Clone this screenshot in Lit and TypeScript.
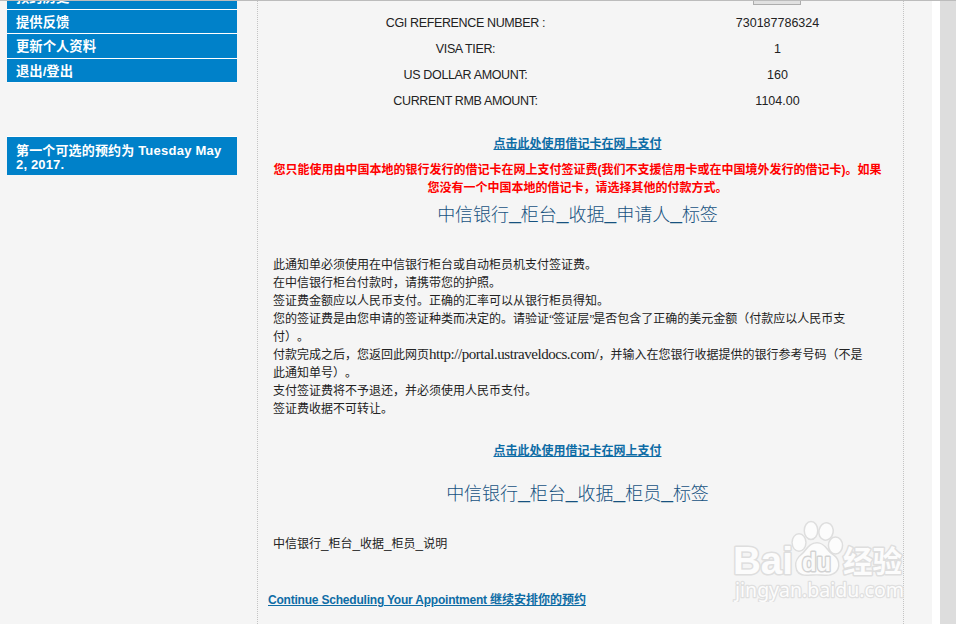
import { LitElement, html, css } from "lit";
import { customElement } from "lit/decorators.js";

const menu = ["预约历史", "提供反馈", "更新个人资料", "退出/登出"];

const rows: [string, string][] = [
  ["CGI REFERENCE NUMBER :", "730187786324"],
  ["VISA TIER:", "1"],
  ["US DOLLAR AMOUNT:", "160"],
  ["CURRENT RMB AMOUNT:", "1104.00"],
];

const underscored = (text: string) =>
  text.split("_").map((part, i) => (i ? html`<span class="us">_</span>${part}` : part));

@customElement("side-menu")
class SideMenu extends LitElement {
  static styles = css`
    :host { display: block; width: 230px; color: #fff; font: bold 13.330px/14px "Liberation Sans", "Noto Sans CJK SC", sans-serif; }
    .item { height: 24px; line-height: 25px; padding-left: 9px; background: #0081c9; border-bottom: 1px solid #fff; box-sizing: border-box; white-space: nowrap; overflow: hidden; }
    .item:nth-child(1) { height: 9px; line-height: 0; display: flex; align-items: flex-end; }
    .item:nth-child(1) span { line-height: 22px; }
    .item:nth-child(3) { height: 25px; line-height: 26px; }
    .item:nth-child(4) { border-bottom-color: #fafafa; }
    .notice { margin-top: 53px; height: 39px; box-sizing: border-box; border-top: 1px solid #fff; background: #0081c9; padding: 7px 9px 0; white-space: nowrap; font-size: 13px; letter-spacing: 0.15px; }
    .line { height: 14px; }
    .latin { letter-spacing: 0.25px; }
  `;
  render() {
    return html`
      ${menu.map((m) => html`<div class="item"><span>${m}</span></div>`)}
      <div class="notice">
        <div class="line">第一个可选的预约为 <span class="latin">Tuesday May</span></div>
        <div class="line">2, 2017.</div>
      </div>
    `;
  }
}

@customElement("baidu-mark")
class BaiduMark extends LitElement {
  static styles = css`
    :host { display: block; width: 180px; height: 84px; }
    svg { display: block; }
    .g { fill: #fcfcfc; stroke: #dedede; stroke-width: 3px; paint-order: stroke; stroke-linejoin: round; }
    .latin { font: bold 38px "Liberation Sans", sans-serif; }
    .du { font: bold 26px "Liberation Sans", sans-serif; fill: #fafafa; stroke: #d2d2d2; }
    .cjk { font: bold 30px "Noto Sans CJK SC", sans-serif; }
    .url { font: 20px "Noto Sans", sans-serif; stroke: #dfdfdf; stroke-width: 2.500px; }
  `;
  render() {
    return html`
      <svg width="180" height="84" viewBox="730 518 180 84">
        <text class="g latin" x="733" y="573.500" textLength="60" lengthAdjust="spacingAndGlyphs">Bai</text>
        <g class="g">
          <ellipse cx="799" cy="542.5" rx="6.2" ry="8" />
          <ellipse cx="811" cy="530.5" rx="6" ry="8.2" />
          <ellipse cx="826" cy="531.5" rx="6.4" ry="8" transform="rotate(12 826 531.5)" />
          <ellipse cx="835.5" cy="545.5" rx="6.3" ry="7.8" />
          <path d="M817 543.5C810 543.5 807 550 803 554C798 558 796 561 796.500 566C797 572 801 575 808 574.500C813 574 820 574 825 574.500C832 575 837 572 838 566C838.500 561 836 557 831 554C826 550 824 543.500 817 543.500Z" />
        </g>
        <text class="g du" x="802" y="570.5" textLength="29" lengthAdjust="spacingAndGlyphs">du</text>
        <text class="g cjk" x="843" y="572" textLength="59" lengthAdjust="spacingAndGlyphs">经验</text>
        <text class="g url" x="735" y="596.500" textLength="169" lengthAdjust="spacingAndGlyphs">jingyan.baidu.com</text>
      </svg>
    `;
  }
}

@customElement("app-root")
class AppRoot extends LitElement {
  static styles = css`
    :host { display: block; width: 956px; height: 624px; overflow: hidden; background: #ddd; position: relative; }
    .page { display: flex; box-sizing: border-box; width: 940px; height: 624px; background: #f5f5f5; border-right: 8px solid #fff; padding-left: 7px; padding-top: 1px; }
    .edge { position: absolute; left: 0; top: 0; width: 956px; height: 1px; background: #bcbcbc; }
    .main { margin-left: 20px; width: 647px; box-sizing: border-box; border-left: 1px dotted #c4c4c4; border-right: 1px dotted #c4c4c4; color: #222; font: 12px/18px "Liberation Sans", "Noto Sans CJK SC", sans-serif; white-space: nowrap; }
    .body { margin-left: 15px; width: 609px; }
    .button { box-sizing: border-box; width: 48px; height: 4px; margin-left: 480px; background: #e1e1e1; border: 1px solid #adadad; border-top: 0; }
    .table { display: grid; grid-template-columns: 385px 239px; grid-auto-rows: 26px; line-height: 26px; text-align: center; margin-top: 5px; font-size: 12.500px; }
    .key { letter-spacing: -0.36px; }
    a { color: #0e6ca5; font-weight: bold; text-decoration: underline; }
    .pay { text-align: center; height: 18px; }
    .pay.first { margin-top: 21px; }
    .pay.second { margin-top: 24px; }
    .warn { margin-top: 8px; color: #f00; font-weight: bold; text-align: center; }
    .title { text-align: center; font-weight: 300; font-size: 18px; line-height: 24px; height: 24px; color: #17527f; }
    .title .us { font-size: 21px; line-height: 0; position: relative; top: -2px; }
    .title.first { margin-top: 6px; }
    .title.second { margin-top: 22px; }
    .text { margin-top: 29px; text-spacing-trim: space-all; }
    .text div, .note { height: 18px; }
    .url { font: 15px/0 "Liberation Serif", serif; letter-spacing: -0.45px; }
    .q { font-family: "Liberation Serif", serif; letter-spacing: -1.2px; }
    .note { margin-top: 29px; }
    .note .us { font-size: 13.500px; line-height: 0; }
    .next { margin: 38px 0 0 -5px; }
    .next span { letter-spacing: -0.21px; }
    .mark { position: absolute; left: 730px; top: 518px; }
  `;
  render() {
    return html`
      <div class="page">
        <side-menu></side-menu>
        <div class="main">
          <div class="body">
            <div class="button"></div>
            <div class="table">${rows.map(([k, v]) => html`<div class="key">${k}</div><div>${v}</div>`)}</div>
            <div class="pay first"><a>点击此处使用借记卡在网上支付</a></div>
            <div class="warn">
              <div>您只能使用由中国本地的银行发行的借记卡在网上支付签证费(我们不支援信用卡或在中国境外发行的借记卡)。如果</div>
              <div>您没有一个中国本地的借记卡，请选择其他的付款方式。</div>
            </div>
            <div class="title first">${underscored("中信银行_柜台_收据_申请人_标签")}</div>
            <div class="text">
              <div>此通知单必须使用在中信银行柜台或自动柜员机支付签证费。</div>
              <div>在中信银行柜台付款时，请携带您的护照。</div>
              <div>签证费金额应以人民币支付。正确的汇率可以从银行柜员得知。</div>
              <div>您的签证费是由您申请的签证种类而决定的。请验证<span class="q">“</span>签证层<span class="q">”</span>是否包含了正确的美元金额（付款应以人民币支</div>
              <div>付）。</div>
              <div>付款完成之后，您返回此网页<span class="url">http://portal.ustraveldocs.com/</span>，并输入在您银行收据提供的银行参考号码（不是</div>
              <div>此通知单号）。</div>
              <div>支付签证费将不予退还，并必须使用人民币支付。</div>
              <div>签证费收据不可转让。</div>
            </div>
            <div class="pay second"><a>点击此处使用借记卡在网上支付</a></div>
            <div class="title second">${underscored("中信银行_柜台_收据_柜员_标签")}</div>
            <div class="note">${underscored("中信银行_柜台_收据_柜员_说明")}</div>
            <div class="next"><a><span>Continue Scheduling Your Appointment </span>继续安排你的预约</a></div>
          </div>
        </div>
      </div>
      <div class="edge"></div>
      <baidu-mark class="mark"></baidu-mark>
    `;
  }
}
